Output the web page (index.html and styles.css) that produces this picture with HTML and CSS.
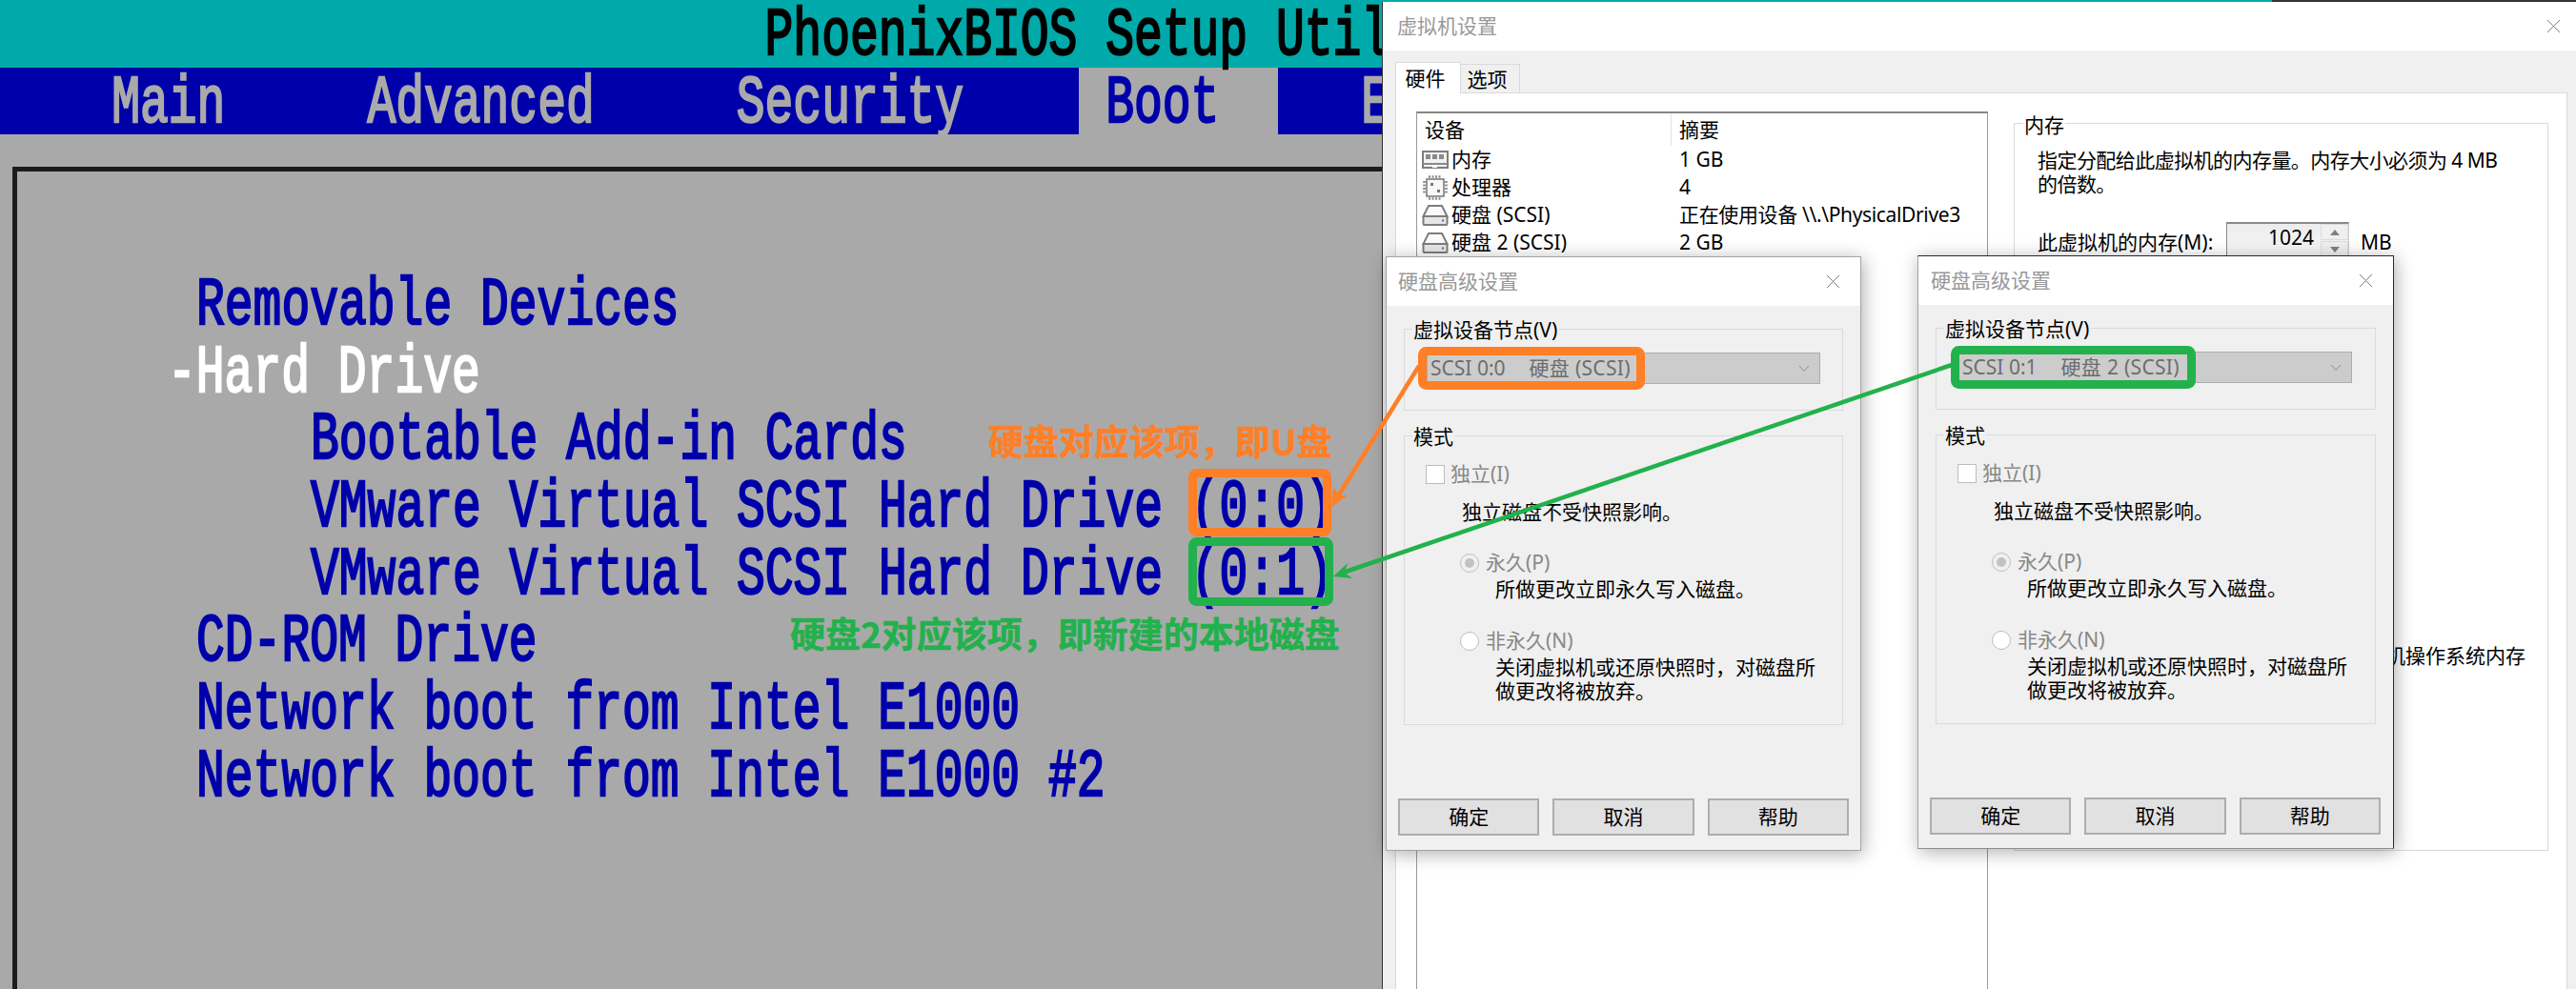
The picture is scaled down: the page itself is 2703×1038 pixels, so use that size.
FILE: index.html
```html
<!DOCTYPE html>
<html lang="zh-CN">
<head>
<meta charset="utf-8">
<title>PhoenixBIOS 与虚拟机设置</title>
<link rel="stylesheet" href="styles.css">
</head>
<body>
<div class="desktop">

  <section class="bios">
    <div class="bios-title"><span class="glyph">PhoenixBIOS Setup Utility</span></div>
    <nav class="bios-tabs">
      <div class="bios-tab"><span class="glyph">Main</span></div>
      <div class="bios-tab"><span class="glyph">Advanced</span></div>
      <div class="bios-tab"><span class="glyph">Security</span></div>
      <div class="bios-tab bios-tab-on"><span class="glyph">Boot</span></div>
      <div class="bios-tab"><span class="glyph">Exit</span></div>
    </nav>
    <div class="bios-frame">
      <div class="bios-row lvl1"><span class="glyph">Removable Devices</span></div>
      <div class="bios-row lvl0 bios-row-on"><span class="glyph">-Hard Drive</span></div>
      <div class="bios-row lvl2"><span class="glyph">Bootable Add-in Cards</span></div>
      <div class="bios-row lvl2"><span class="glyph">VMware Virtual SCSI Hard Drive (0:0)</span></div>
      <div class="bios-row lvl2"><span class="glyph">VMware Virtual SCSI Hard Drive (0:1)</span></div>
      <div class="bios-row lvl1"><span class="glyph">CD-ROM Drive</span></div>
      <div class="bios-row lvl1"><span class="glyph">Network boot from Intel E1000</span></div>
      <div class="bios-row lvl1"><span class="glyph">Network boot from Intel E1000 #2</span></div>
    </div>
  </section>

  <section class="win-main">
    <header class="win-bar">
      <span class="win-title">虚拟机设置</span>
      <svg class="win-close" viewBox="0 0 16 16"><path d="M1 1 L15 15 M15 1 L1 15"/></svg>
    </header>
    <div class="win-body">
      <div class="tabs">
        <div class="tab tab-on">硬件</div>
        <div class="tab">选项</div>
      </div>
      <div class="panel">
        <div class="dev-list">
          <div class="dev-head"><div class="dev-h1">设备</div><div class="dev-h2">摘要</div></div>
          <div class="dev-row">
            <div class="dev-name">
              <svg class="dev-icon" viewBox="0 0 28 28"><rect x="1" y="5" width="26" height="17" fill="#f2f2f2" stroke="#7d7d7d" stroke-width="2"/><rect x="4" y="8" width="5" height="5" fill="#8a8a8a"/><rect x="11" y="8" width="5" height="5" fill="#8a8a8a"/><rect x="18" y="8" width="5" height="5" fill="#8a8a8a"/><rect x="1" y="17" width="26" height="2" fill="#8a8a8a"/><rect x="11" y="19" width="5" height="3" fill="#fff"/></svg>
              <span>内存</span>
            </div>
            <div class="dev-val">1 GB</div>
          </div>
          <div class="dev-row">
            <div class="dev-name">
              <svg class="dev-icon" viewBox="0 0 28 28"><rect x="5" y="5" width="18" height="18" fill="#f8f8f8" stroke="#7d7d7d" stroke-width="1.6"/><rect x="9" y="9" width="3" height="3" fill="#777"/><rect x="16" y="16" width="3" height="3" fill="#777"/><path d="M7 2.5 H21 M7 25.5 H21 M2.5 7 V21 M25.5 7 V21" fill="none" stroke="#8a8a8a" stroke-width="2.6" stroke-dasharray="2 1.5"/></svg>
              <span>处理器</span>
            </div>
            <div class="dev-val">4</div>
          </div>
          <div class="dev-row">
            <div class="dev-name">
              <svg class="dev-icon" viewBox="0 0 28 28"><path d="M7 4 H21 L26.5 15 H1.5 Z" fill="#fafafa" stroke="#7d7d7d" stroke-width="2"/><rect x="1.5" y="15" width="25" height="9" rx="1" fill="#e6e6e6" stroke="#7d7d7d" stroke-width="2"/><rect x="21" y="18.5" width="2" height="2" fill="#666"/></svg>
              <span>硬盘 (SCSI)</span>
            </div>
            <div class="dev-val dev-val-long">正在使用设备 \\.\PhysicalDrive3</div>
          </div>
          <div class="dev-row">
            <div class="dev-name">
              <svg class="dev-icon" viewBox="0 0 28 28"><path d="M7 4 H21 L26.5 15 H1.5 Z" fill="#fafafa" stroke="#7d7d7d" stroke-width="2"/><rect x="1.5" y="15" width="25" height="9" rx="1" fill="#e6e6e6" stroke="#7d7d7d" stroke-width="2"/><rect x="21" y="18.5" width="2" height="2" fill="#666"/></svg>
              <span>硬盘 2 (SCSI)</span>
            </div>
            <div class="dev-val">2 GB</div>
          </div>
        </div>
        <div class="mem-group">
          <div class="mem-title">内存</div>
          <p class="mem-text">指定分配给此虚拟机的内存量。内存大小必须为 4 MB 的倍数。</p>
          <div class="mem-row">
            <span class="mem-label">此虚拟机的内存(M):</span>
            <div class="spin">
              <span class="spin-value">1024</span>
              <div class="spin-btns">
                <div class="spin-btn"><i class="tri-up"></i></div>
                <div class="spin-btn"><i class="tri-down"></i></div>
              </div>
            </div>
            <span class="mem-unit">MB</span>
          </div>
          <p class="mem-note">机操作系统内存</p>
        </div>
      </div>
    </div>
  </section>

  <section class="dlg dlg-one">
    <header class="dlg-bar">
      <span class="win-title">硬盘高级设置</span>
      <svg class="dlg-close" viewBox="0 0 16 16"><path d="M1 1 L15 15 M15 1 L1 15"/></svg>
    </header>
    <div class="dlg-body">
      <div class="grp grp-node">
        <div class="grp-title">虚拟设备节点(V)</div>
        <div class="combo">
          <span>SCSI 0:0</span><span class="combo-name">硬盘 (SCSI)</span>
          <svg class="combo-arrow" viewBox="0 0 12 8"><path d="M1 1 L6 6.5 L11 1"/></svg>
        </div>
      </div>
      <div class="grp grp-mode">
        <div class="grp-title">模式</div>
        <div class="opt opt-check"><i class="check"></i><span class="off">独立(I)</span></div>
        <div class="note note-check">独立磁盘不受快照影响。</div>
        <div class="opt opt-radio opt-first"><i class="radio radio-on"></i><span class="off">永久(P)</span></div>
        <div class="note note-radio">所做更改立即永久写入磁盘。</div>
        <div class="opt opt-radio opt-second"><i class="radio"></i><span class="off">非永久(N)</span></div>
        <div class="note note-radio">关闭虚拟机或还原快照时，对磁盘所<br>做更改将被放弃。</div>
      </div>
      <div class="btn-row">
        <div class="btn">确定</div><div class="btn">取消</div><div class="btn">帮助</div>
      </div>
    </div>
  </section>

  <section class="dlg dlg-two">
    <header class="dlg-bar">
      <span class="win-title">硬盘高级设置</span>
      <svg class="dlg-close" viewBox="0 0 16 16"><path d="M1 1 L15 15 M15 1 L1 15"/></svg>
    </header>
    <div class="dlg-body">
      <div class="grp grp-node">
        <div class="grp-title">虚拟设备节点(V)</div>
        <div class="combo">
          <span>SCSI 0:1</span><span class="combo-name">硬盘 2 (SCSI)</span>
          <svg class="combo-arrow" viewBox="0 0 12 8"><path d="M1 1 L6 6.5 L11 1"/></svg>
        </div>
      </div>
      <div class="grp grp-mode">
        <div class="grp-title">模式</div>
        <div class="opt opt-check"><i class="check"></i><span class="off">独立(I)</span></div>
        <div class="note note-check">独立磁盘不受快照影响。</div>
        <div class="opt opt-radio opt-first"><i class="radio radio-on"></i><span class="off">永久(P)</span></div>
        <div class="note note-radio">所做更改立即永久写入磁盘。</div>
        <div class="opt opt-radio opt-second"><i class="radio"></i><span class="off">非永久(N)</span></div>
        <div class="note note-radio">关闭虚拟机或还原快照时，对磁盘所<br>做更改将被放弃。</div>
      </div>
      <div class="btn-row">
        <div class="btn">确定</div><div class="btn">取消</div><div class="btn">帮助</div>
      </div>
    </div>
  </section>

  <svg class="marks" viewBox="0 0 2703 1038">
    <g class="mark-orange">
      <rect x="1251.5" y="496.5" width="141" height="62" rx="4"/>
      <rect x="1492.5" y="368.5" width="229" height="36" rx="4"/>
      <line x1="1489" y1="384" x2="1402" y2="524"/>
      <polygon points="1397,532 1399,512 1406,520 1414,520"/>
    </g>
    <g class="mark-green">
      <rect x="1251.5" y="568.5" width="143" height="63" rx="4"/>
      <rect x="2051.5" y="367.5" width="248" height="36" rx="4"/>
      <line x1="2048" y1="383" x2="1409" y2="601"/>
      <polygon points="1399,605 1414,591 1411,601 1419,607"/>
    </g>
  </svg>

  <div class="say say-orange">硬盘对应该项，即U盘</div>
  <div class="say say-green">硬盘2对应该项，即新建的本地磁盘</div>
</div>
</body>
</html>
```
FILE: styles.css
```css
* { box-sizing: border-box; }
html, body { margin: 0; padding: 0; background: #333; }
.desktop {
  position: relative;
  width: 2703px;
  height: 1038px;
  overflow: hidden;
  background: #333;
  font-family: "Noto Sans", "Noto Sans CJK SC", sans-serif;
  font-size: 21px;
  line-height: 25px;
  color: #000;
}

/* BIOS */
.bios {
  width: 2384px;
  height: 1038px;
  overflow: hidden;
  background: #a9a9a9;
  font-family: "Liberation Mono", monospace;
  font-weight: 400;
  font-size: 49.67px;
  line-height: 70.67px;
  color: #0000aa;
  filter: blur(0.6px);
}
.glyph {
  display: inline-block;
  white-space: pre;
  -webkit-text-stroke: 1.7px currentColor;
  transform: translateX(-2px) scaleY(1.4);
  transform-origin: 0 25.1px;
}
.bios-title {
  height: 70.67px;
  padding-left: 27ch;
  background: #00aaaa;
  color: #000;
}
.bios-tabs {
  display: flex;
  gap: 2ch;
  height: 70.67px;
  padding-left: 3ch;
  background: #0000aa;
  color: #aaa;
}
.bios-tab { padding: 0 2ch 0 1ch; }
.bios-tab-on { background: #a9a9a9; color: #0000aa; }
.bios-frame {
  height: 900px;
  margin: 34px 0 0 13px;
  padding-top: 102.67px;
  border-top: 5px solid #1c1c1c;
  border-left: 5px solid #1c1c1c;
}
.bios-row { height: 70.67px; }
.lvl0 { padding-left: 160px; }
.lvl1 { padding-left: 190px; }
.lvl2 { padding-left: 310px; }
.bios-row-on { color: #fff; }

/* Main window */
.win-main {
  position: absolute;
  left: 1450px;
  top: 2px;
  right: 0;
  bottom: 0;
  border-left: 1px solid #333;
  background: #f0f0f0;
}
.win-bar {
  display: flex;
  align-items: center;
  justify-content: space-between;
  height: 51px;
  padding: 0 16px 0 15px;
  background: #fff;
}
.win-title { color: #999; }
.win-close, .dlg-close {
  width: 15px;
  height: 15px;
  fill: none;
  stroke: #777;
  stroke-width: 1;
}
.win-body { padding: 12px 9px 0 13px; }
.tabs { display: flex; align-items: flex-end; }
.tab {
  width: 62px;
  height: 30px;
  padding-right: 6px;
  border: 1px solid #d9d9d9;
  border-bottom: 0;
  border-left: 0;
  text-align: center;
  line-height: 30px;
}
.tab-on {
  width: 69px;
  height: 33px;
  margin-bottom: -1px;
  position: relative;
  background: #fff;
  border-left: 1px solid #d9d9d9;
  line-height: 32px;
}
.panel {
  display: flex;
  align-items: flex-start;
  height: 960px;
  padding: 19px 0 0 21px;
  background: #fff;
  border: 1px solid #d9d9d9;
}
.dev-list {
  flex: none;
  width: 600px;
  height: 930px;
  border: 1px solid #9a9a9a;
  border-top: 2px solid #868686;
  border-bottom: 0;
}
.dev-head { display: flex; height: 34px; align-items: center; }
.dev-h1 { width: 266px; padding-left: 8px; }
.dev-h2 {
  height: 34px;
  padding-left: 8px;
  line-height: 34px;
  border-left: 1px solid #e5e5e5;
}
.dev-row { display: flex; align-items: center; height: 29px; }
.dev-name {
  display: flex;
  align-items: center;
  gap: 3px;
  width: 267px;
  padding-left: 5px;
}
.dev-icon { flex: none; width: 28px; height: 28px; }
.dev-val { padding-left: 8px; }
.dev-val-long { letter-spacing: -0.35px; }
.mem-group {
  flex: none;
  width: 561px;
  height: 764px;
  margin: 12px 0 0 27px;
  padding: 0 24px;
  border: 1px solid #d9d9d9;
}
.mem-title {
  display: table;
  margin: -11px 0 0 -15px;
  padding: 0 1px;
  background: #fff;
}
.mem-text { width: 505px; margin: 12px 0 0; letter-spacing: -0.55px; }
.mem-row {
  display: flex;
  align-items: center;
  margin-top: 27px;
}
.mem-label { width: 198px; padding-top: 4px; }
.spin {
  display: flex;
  justify-content: flex-end;
  width: 129px;
  height: 38px;
  border: 1px solid #cfcfcf;
  border-top: 2px solid #8a8a8a;
  border-left: 1px solid #8a8a8a;
  background: linear-gradient(#ececec, #f8f8f8);
}
.spin-value { padding: 2px 7px 0 0; }
.spin-btns { display: flex; flex-direction: column; gap: 1px; width: 29px; }
.spin-btn {
  display: flex;
  align-items: center;
  justify-content: center;
  height: 17px;
  background: #f0f0f0;
  border: 1px solid #dcdcdc;
}
.tri-up, .tri-down {
  width: 0;
  height: 0;
  border-left: 5px solid transparent;
  border-right: 5px solid transparent;
}
.tri-up { border-bottom: 6px solid #808080; }
.tri-down { border-top: 6px solid #808080; }
.mem-unit { padding: 4px 0 0 12px; }
.mem-note { margin: 405px 0 0; padding-left: 365px; white-space: nowrap; }

/* Dialogs */
.dlg {
  position: absolute;
  background: #f0f0f0;
  border: 1px solid #a5a5a5;
  box-shadow: 2px 3px 18px rgba(0, 0, 0, 0.32);
}
.dlg-one { left: 1454px; top: 269px; width: 499px; height: 624px; }
.dlg-two {
  left: 2012px;
  top: 268px;
  width: 500px;
  height: 623px;
  border-color: #2b2b2b #2b2b2b #8c8c8c #a5a5a5;
}
.dlg-bar {
  display: flex;
  align-items: center;
  justify-content: space-between;
  height: 51px;
  padding: 0 21px 0 12px;
  background: #fff;
}
.dlg-two .dlg-bar { padding-left: 13px; }
.dlg-body { padding: 24px 18px 0; }
.grp { border: 1px solid #dadada; }
.grp-node { height: 86px; }
.grp-mode { height: 304px; margin-top: 26px; }
.grp-title {
  display: table;
  margin: -12px 0 0 8px;
  padding: 0 1px;
  background: #f0f0f0;
}
.combo {
  display: flex;
  align-items: center;
  position: relative;
  width: 413px;
  height: 33px;
  margin: 11px 0 0 23px;
  padding-left: 3px;
  background: #cccccc;
  border: 1px solid #adadad;
  color: #6d6d6d;
}
.combo-name { margin-left: 25px; letter-spacing: 0.3px; }
.combo-arrow {
  position: absolute;
  right: 10px;
  top: 12px;
  width: 12px;
  height: 8px;
  fill: none;
  stroke: #8f8f8f;
  stroke-width: 1;
}
.opt { display: flex; align-items: center; height: 25px; }
.off { color: #888; }
.opt-check { margin-top: 14px; padding-left: 22px; gap: 6px; }
.opt-radio { padding-left: 58px; gap: 7px; }
.opt-first { margin-top: 28px; }
.opt-second { margin-top: 29px; }
.check {
  flex: none;
  width: 20px;
  height: 20px;
  background: #fff;
  border: 1px solid #bdbdbd;
}
.radio {
  flex: none;
  display: flex;
  align-items: center;
  justify-content: center;
  width: 20px;
  height: 20px;
  background: #fff;
  border: 1px solid #bdbdbd;
  border-radius: 50%;
}
.radio-on { background: #f0f0f0; }
.radio-on::after {
  content: "";
  width: 10px;
  height: 10px;
  border-radius: 50%;
  background: #c2c2c2;
}
.note { line-height: 25px; }
.note-check { margin-top: 15px; padding-left: 60px; }
.note-radio { margin-top: 3px; padding-left: 95px; }
.btn-row { display: flex; gap: 14px; margin: 77px -6px 0; }
.btn {
  flex: 1;
  height: 39px;
  line-height: 35px;
  text-align: center;
  background: #e1e1e1;
  border: 2px solid #adadad;
}
.dlg-two .btn-row { margin: 77px -5px 0 -6px; }

/* Annotations */
.marks { position: absolute; left: 0; top: 0; width: 2703px; height: 1038px; }
.mark-orange rect, .mark-green rect { fill: none; stroke-width: 9; }
.mark-orange rect, .mark-orange line { stroke: #ff7f27; }
.mark-green rect, .mark-green line { stroke: #22b14c; }
.mark-orange line, .mark-green line { stroke-width: 4.5; }
.mark-orange polygon { fill: #ff7f27; }
.mark-green polygon { fill: #22b14c; }
.say {
  position: absolute;
  font-family: "Noto Sans CJK SC", sans-serif;
  font-weight: 700;
  white-space: nowrap;
  line-height: 40px;
  -webkit-text-stroke: 0.5px currentColor;
}
.say-orange { left: 1037px; top: 442px; font-size: 37px; color: #ff7f27; }
.say-green { left: 829px; top: 644px; font-size: 37px; color: #22b14c; }
```
